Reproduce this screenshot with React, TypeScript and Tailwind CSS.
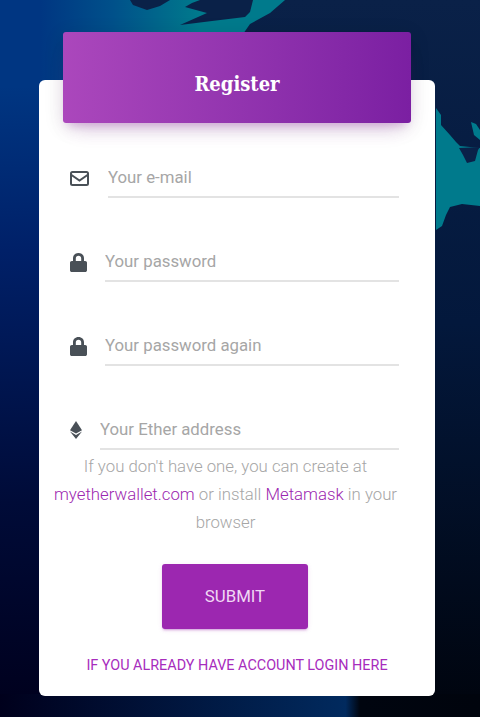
import type { ReactNode } from "react";

function MailIcon() {
  return (
    <svg width="19" height="15" viewBox="0 0 19 15" fill="none" stroke="#495057" strokeWidth="2">
      <rect x="1" y="1" width="17" height="13" rx="1.5" />
      <path d="M1.5 4 9.5 9.5 17.5 4" />
    </svg>
  );
}

function LockIcon() {
  return (
    <svg width="17" height="19" viewBox="0 0 17 19" fill="#495057">
      <path d="M8.5 0C5.2 0 3 2.3 3 5.4V8H1.8C.8 8 0 8.8 0 9.8v7.4C0 18.2.8 19 1.8 19h13.4c1 0 1.8-.8 1.8-1.8V9.8C17 8.8 16.2 8 15.2 8H14V5.4C14 2.3 11.8 0 8.5 0ZM5.8 8V5.4C5.8 3.8 6.9 2.7 8.5 2.7s2.7 1.1 2.7 2.7V8Z" />
    </svg>
  );
}

function EtherIcon() {
  return (
    <svg width="12" height="18" viewBox="0 0 12 18" fill="#495057">
      <path d="M6 0 12 9.2 6 12.6 0 9.2Z" />
      <path d="M6 13.9 12 10.4 6 18 0 10.4Z" />
    </svg>
  );
}

function Background() {
  return (
    <svg className="absolute inset-0 h-full w-full" viewBox="0 0 480 717" preserveAspectRatio="none">
      <defs>
        <linearGradient id="sea" x1="0" y1="0" x2="0" y2="1">
          <stop offset="0" stopColor="#0a2148" />
          <stop offset="0.45" stopColor="#03183c" />
          <stop offset="1" stopColor="#00040d" />
        </linearGradient>
        <linearGradient id="water" gradientUnits="userSpaceOnUse" x1="40" y1="0" x2="200" y2="0">
          <stop offset="0" stopColor="#003682" />
          <stop offset="0.45" stopColor="#00508a" />
          <stop offset="1" stopColor="#007a8c" />
        </linearGradient>
        <linearGradient id="strip" x1="0" y1="0" x2="0" y2="1">
          <stop offset="0" stopColor="#003682" />
          <stop offset="0.12" stopColor="#003682" />
          <stop offset="0.35" stopColor="#002068" />
          <stop offset="0.7" stopColor="#000b38" />
          <stop offset="1" stopColor="#00001c" />
        </linearGradient>
        <linearGradient id="bottom" x1="0" y1="0" x2="1" y2="0">
          <stop offset="0" stopColor="#00001c" />
          <stop offset="0.72" stopColor="#012a5e" />
          <stop offset="0.75" stopColor="#00050f" />
          <stop offset="1" stopColor="#00040d" />
        </linearGradient>
      </defs>
      <rect width="480" height="717" fill="url(#sea)" />
      <path d="M0 0H285L270 13 250 24 243 34V120H0Z" fill="url(#water)" />
      <rect y="0" width="40" height="717" fill="url(#strip)" />
      <rect y="694" width="480" height="23" fill="url(#bottom)" />
      {/* ireland and britain */}
      <path d="M130 0H170L160 6 147 10 133 5Z" fill="#0a2148" />
      <path d="M200 0H253L250 12 245 17 212 21 180 25 207 13 185 7 192 3Z" fill="#0a2148" />
      {/* coast on the right */}
      <path
        d="M436 108 441 115 441 125 450 135 456 142 460 146 480 148V206L462 204 450 207 446 215 442 226 436 230Z"
        fill="#007a8c"
      />
      <path d="M471 122 476 124 480 130V140L474 135Z" fill="#007a8c" />
      <path d="M459 148 480 147 478 150 475 161 467 163 463 155Z" fill="#0a2148" />
    </svg>
  );
}

function Field({
  icon,
  placeholder,
  inputClass,
}: {
  icon: ReactNode;
  placeholder: string;
  inputClass: string;
}) {
  return (
    <div className="flex h-[84px] items-start pl-[31px] pr-[36px]">
      <div className="flex h-[34px] shrink-0 items-center">{icon}</div>
      <input
        placeholder={placeholder}
        className={`h-[37px] min-w-0 flex-1 border-b-2 border-[#e3e3e3] bg-transparent pb-[3px] text-[16.8px] outline-none placeholder:text-[#a6a6a6] ${inputClass}`}
      />
    </div>
  );
}

export default function App() {
  return (
    <div className="relative flex min-h-[717px] justify-center overflow-hidden font-['Roboto',sans-serif]">
      <Background />
      <div className="relative mt-[80px] h-[616px] w-[396px] -translate-x-[3px] rounded-[6px] bg-white">
        <div className="mx-[24px] -mt-[48px] flex h-[91px] items-center justify-center rounded-[3px] bg-gradient-to-r from-[#ab47bc] to-[#7b1fa2] pt-[12px] shadow-[0_12px_20px_-10px_rgba(156,39,176,0.28),0_4px_20px_0_rgba(0,0,0,0.12),0_7px_8px_-5px_rgba(156,39,176,0.2)]">
          <h1 className="font-['DejaVu_Serif_Condensed','DejaVu_Serif',serif] text-[20px] font-bold text-white">
            Register
          </h1>
        </div>

        <div className="pt-[38px]">
          <Field icon={<MailIcon />} placeholder="Your e-mail" inputClass="ml-[19px]" />
          <Field icon={<LockIcon />} placeholder="Your password" inputClass="ml-[18px]" />
          <Field icon={<LockIcon />} placeholder="Your password again" inputClass="ml-[18px]" />
          <div className="-mb-[45px]">
            <Field icon={<EtherIcon />} placeholder="Your Ether address" inputClass="ml-[18px]" />
          </div>
        </div>

        <p className="pl-[11px] pr-[34px] text-center text-[16.8px] leading-[28px] font-light text-[#a6a6a6]">
          If you don't have one, you can create at{" "}
          <a className="text-[#9c27b0]">myetherwallet.com</a> or install{" "}
          <a className="text-[#9c27b0]">Metamask</a> in your browser
        </p>

        <div className="mt-[28px] flex justify-center pr-[4px]">
          <button className="h-[65px] w-[146px] rounded-[3px] bg-[#9c27b0] text-[16.8px] text-[#f0d8f4] shadow-[0_2px_2px_0_rgba(156,39,176,0.14),0_3px_1px_-2px_rgba(156,39,176,0.2),0_1px_5px_0_rgba(156,39,176,0.12)]">
            SUBMIT
          </button>
        </div>

        <p className="mt-[26px] text-center text-[14.4px] text-[#a72cbd]">
          IF YOU ALREADY HAVE ACCOUNT LOGIN HERE
        </p>
      </div>
    </div>
  );
}
